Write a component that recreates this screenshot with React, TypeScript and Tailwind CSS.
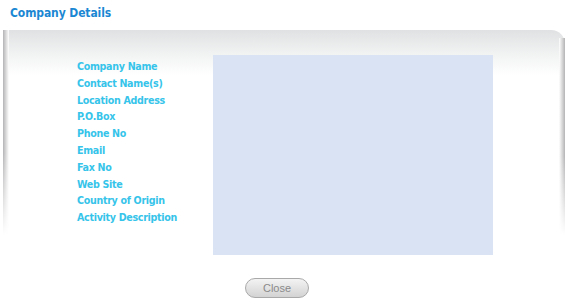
const labels = [
  "Company Name",
  "Contact Name(s)",
  "Location Address",
  "P.O.Box",
  "Phone No",
  "Email",
  "Fax No",
  "Web Site",
  "Country of Origin",
  "Activity Description",
];

export default function App() {
  return (
    <div className="w-[567px] h-[303px] bg-white overflow-hidden font-['DejaVu_Sans_Condensed','DejaVu_Sans',Tahoma,sans-serif] [font-stretch:condensed]">
      <h1 className="pl-[10px] pt-[5px] h-[30px] text-[12px] tracking-[-0.1px] font-bold text-[#1b87d3] leading-[16px]">
        Company Details
      </h1>

      {/* panel */}
      <div className="relative ml-[3px] mr-[2px] rounded-tr-[14px] bg-[linear-gradient(to_bottom,#e0e1e2_0px,#f2f3f3_25px,#ffffff_45px)]">
        <div className="absolute left-0 top-0 w-[6px] h-[205px] bg-[linear-gradient(to_right,#b4b4b6,#ffffff)] [mask-image:linear-gradient(to_bottom,black_60%,transparent)]" />
        <div className="absolute right-0 top-[8px] w-[6px] h-[197px] bg-[linear-gradient(to_left,#b4b4b6,#ffffff)] [mask-image:linear-gradient(to_bottom,black_60%,transparent)]" />

        <div className="flex pt-[25px] pl-[74px]">
          <ul className="w-[136px] pt-[3px]">
            {labels.map((l) => (
              <li
                key={l}
                className="h-[16.8px] leading-[16.8px] text-[10.6px] tracking-[-0.3px] font-bold text-[#36c4ea] whitespace-nowrap"
              >
                {l}
              </li>
            ))}
          </ul>
          <div className="w-[280px] h-[200px] bg-[#dae3f3]" />
        </div>
      </div>

      <div className="flex justify-center pt-[23px] pr-[13px]">
        <button className="w-[64px] h-[20px] rounded-full border border-[#a9a9a9] bg-[linear-gradient(to_bottom,#f3f3f3,#d3d3d3)] text-[11px] text-[#8a8a8a] font-['Liberation_Sans',Arial,sans-serif] [font-stretch:normal] leading-[18px]">
          Close
        </button>
      </div>
    </div>
  );
}
